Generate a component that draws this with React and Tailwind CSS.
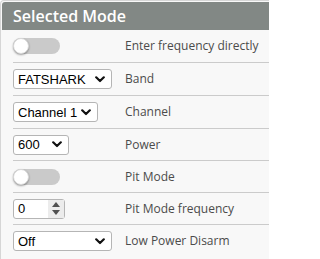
import React from "react";

function Chevron() {
  return (
    <svg width="10" height="7" viewBox="0 0 10 7" className="shrink-0">
      <path d="M1.2 1.3 L5 5 L8.8 1.3" fill="none" stroke="#111" strokeWidth="2.2" strokeLinecap="round" strokeLinejoin="round" />
    </svg>
  );
}

function Select({ value, className }) {
  return (
    <div
      className={`flex h-[20px] items-center justify-between rounded-[3px] border border-[#b5b5b5] bg-white pl-[4px] pr-[6px] font-['Liberation_Sans',Arial,sans-serif] text-[13px] text-black ${className}`}
    >
      <span className="leading-none">{value}</span>
      <Chevron />
    </div>
  );
}

function Toggle() {
  return (
    <div className="relative h-[16px] w-[47px] rounded-full bg-[#cacaca]">
      <div className="absolute left-0 top-0 h-[16px] w-[16px] rounded-full border border-[#d8d8d8] bg-white shadow-[0_1px_2px_rgba(0,0,0,0.35)]" />
    </div>
  );
}

function NumberInput() {
  return (
    <div className="flex h-[20px] w-[52px] items-center justify-between rounded-[3px] border border-[#b5b5b5] bg-white pl-[4px] font-['Liberation_Sans',Arial,sans-serif] text-[13px] text-black">
      <span className="leading-none">0</span>
      <div className="flex h-full w-[16px] flex-col items-center justify-center gap-[3px] bg-[#ececec]">
        <svg width="8" height="5" viewBox="0 0 8 5"><path d="M0 5 L4 0 L8 5 Z" fill="#505050" /></svg>
        <svg width="8" height="5" viewBox="0 0 8 5"><path d="M0 0 L4 5 L8 0 Z" fill="#505050" /></svg>
      </div>
    </div>
  );
}

function Row({ tall, control, label, last }) {
  return (
    <div
      className={`flex items-center ${tall ? "h-[33px]" : "h-[32px]"} ${last ? "" : "border-b border-[#cbcbcb]"}`}
    >
      <div className="flex w-[112px] shrink-0 items-center">{control}</div>
      <div className="whitespace-nowrap text-[12px] text-[#4b4b4b]">{label}</div>
    </div>
  );
}

export default function App() {
  return (
    <div className="h-[259px] w-[269px] overflow-hidden bg-white font-['Open_Sans',sans-serif]">
      <div className="h-full w-[280px] rounded-tl-[4px] border-l border-t border-[#d6d6d6] bg-[#f8f8f8] pl-px pt-px">
        <div className="flex h-[28px] items-center rounded-tl-[3px] bg-[#828885] pl-[11px] text-[16px] font-semibold text-white">
          Selected Mode
        </div>
        <div className="ml-[11px]">
          <Row tall control={<Toggle />} label="Enter frequency directly" />
          <Row tall control={<Select value="FATSHARK" className="w-[99px]" />} label="Band" />
          <Row tall control={<Select value="Channel 1" className="w-[85px]" />} label="Channel" />
          <Row control={<Select value="600" className="w-[56px]" />} label="Power" />
          <Row control={<Toggle />} label="Pit Mode" />
          <Row control={<NumberInput />} label="Pit Mode frequency" />
          <Row control={<Select value="Off" className="w-[99px]" />} label="Low Power Disarm" last />
        </div>
      </div>
    </div>
  );
}
